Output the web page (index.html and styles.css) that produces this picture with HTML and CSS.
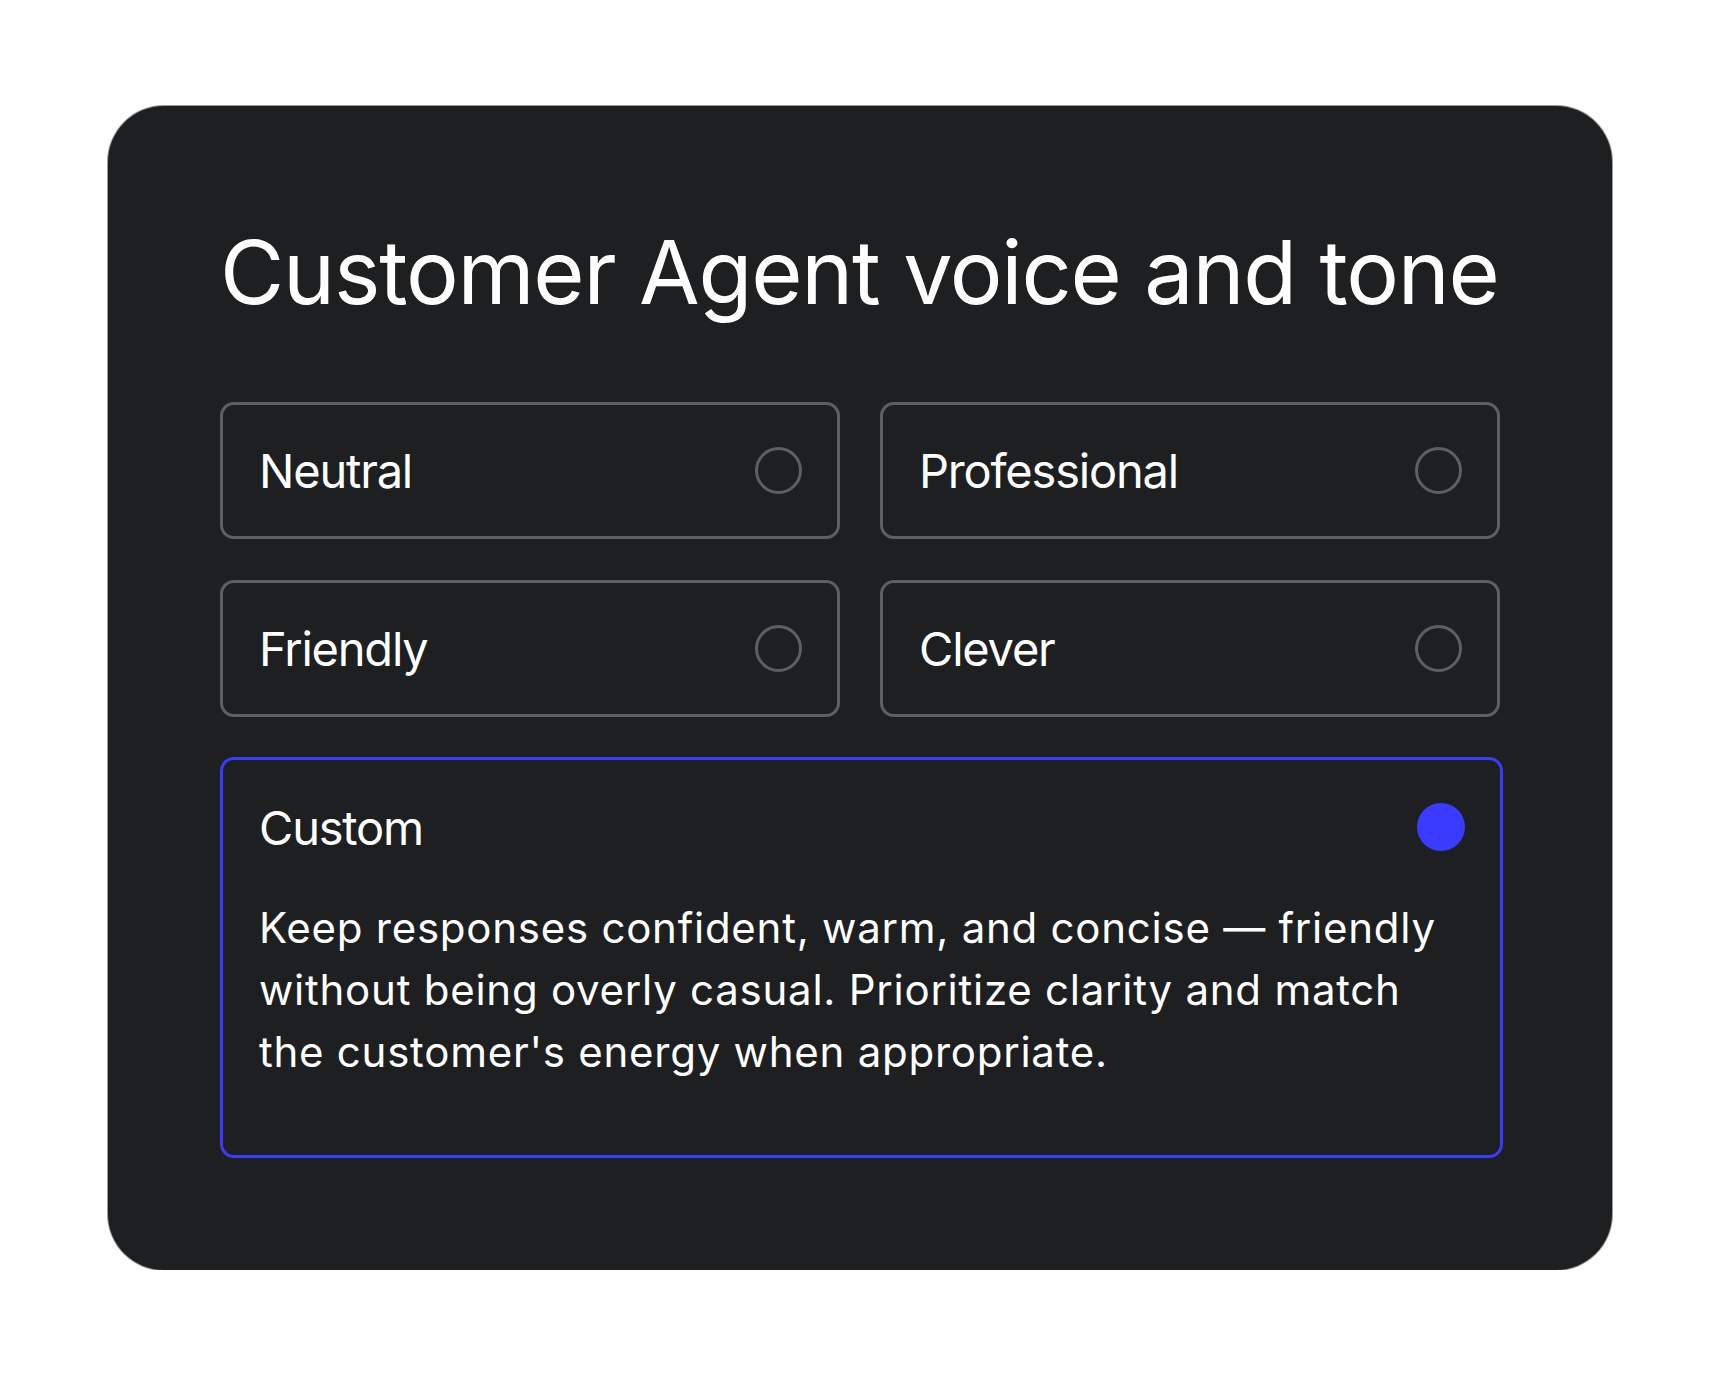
FILE: index.html
```html
<!DOCTYPE html>
<html lang="en">
<head>
<meta charset="utf-8">
<title>Customer Agent voice and tone</title>
<link rel="stylesheet" href="styles.css">
</head>
<body>
<main class="panel">
  <h1 class="panel-title">Customer Agent voice and tone</h1>
  <div class="tone-grid">
    <div class="tone-option">
      <span class="tone-label">Neutral</span>
      <span class="radio"></span>
    </div>
    <div class="tone-option">
      <span class="tone-label">Professional</span>
      <span class="radio"></span>
    </div>
    <div class="tone-option">
      <span class="tone-label">Friendly</span>
      <span class="radio"></span>
    </div>
    <div class="tone-option">
      <span class="tone-label">Clever</span>
      <span class="radio"></span>
    </div>
  </div>
  <div class="tone-custom">
    <div class="tone-custom-head">
      <span class="tone-label">Custom</span>
      <span class="radio radio-on"></span>
    </div>
    <p class="tone-custom-text">Keep responses confident, warm, and concise — friendly without being overly casual. Prioritize clarity and match the customer's energy when appropriate.</p>
  </div>
</main>
</body>
</html>
```

FILE: styles.css
```css
html, body {
  margin: 0;
  padding: 0;
  background: #ffffff;
}

body {
  font-family: Inter, "Noto Sans", "Liberation Sans", sans-serif;
  color: #ffffff;
}

.panel {
  box-sizing: border-box;
  width: 1504px;
  height: 1164px;
  margin: 106px 0 0 108px;
  padding: 122px 112px 111px 112px;
  background: #1e1f21;
  border-radius: 56px;
  box-shadow: 0 0 0 1px #9a9a9a;
}

.panel-title {
  margin: 0 0 86px 0;
  font-size: 88px;
  line-height: 88px;
  font-weight: 400;
  letter-spacing: -1.2px;
  white-space: nowrap;
}

.tone-grid {
  display: grid;
  grid-template-columns: 620px 620px;
  column-gap: 40px;
  row-gap: 41px;
}

.tone-option {
  box-sizing: border-box;
  height: 137px;
  display: flex;
  align-items: center;
  justify-content: space-between;
  padding: 0 35px 0 36px;
  border: 3px solid #5e5f62;
  border-radius: 14px;
}

.tone-label {
  font-size: 47px;
  line-height: 1;
  font-weight: 400;
  letter-spacing: -1.2px;
}

.radio {
  box-sizing: border-box;
  width: 47px;
  height: 47px;
  border-radius: 50%;
  border: 3px solid #5e5f62;
  flex: none;
}

.radio-on {
  border: none;
  background: #3a3bff;
}

.tone-custom {
  box-sizing: border-box;
  height: 401px;
  margin: 40px -3px 0 0;
  padding: 0 35px 0 36px;
  border: 3px solid #3a3bff;
  border-radius: 14px;
}

.tone-custom-head {
  height: 134px;
  display: flex;
  align-items: center;
  justify-content: space-between;
}

.tone-custom-head .radio-on {
  width: 48px;
  height: 48px;
}

.tone-custom-text {
  margin: 3px 0 0 0;
  font-size: 42px;
  line-height: 62px;
  font-weight: 400;
  letter-spacing: 0.75px;
}
```
